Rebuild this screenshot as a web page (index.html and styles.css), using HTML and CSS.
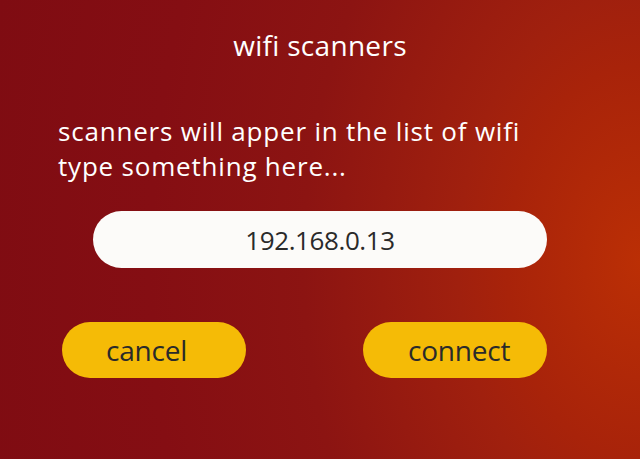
FILE: index.html
```html
<!DOCTYPE html>
<html>
<head>
<meta charset="utf-8">
<link rel="stylesheet" href="styles.css">
</head>
<body>
<div class="screen">
  <h1 class="title">wifi scanners</h1>
  <p class="message">scanners will apper in the list of wifi<br>type something here...</p>
  <div class="field-row">
    <div class="field">192.168.0.13</div>
  </div>
  <div class="actions">
    <button class="btn btn-cancel">cancel</button>
    <button class="btn btn-connect">connect</button>
  </div>
</div>
</body>
</html>
```
FILE: styles.css
```css
html, body {
  margin: 0;
  padding: 0;
  width: 640px;
  height: 459px;
  overflow: hidden;
}
body {
  background: radial-gradient(700px 1036px at 640px 262px,
    #bb2f05 0%, #a8230a 19%, #a0200e 26%, #8c1412 48%, #850e13 70%, #7f0c12 95%);
  font-family: "Open Sans", "Lato", sans-serif;
  font-variant-ligatures: none;
}
.screen {
  display: flex;
  flex-direction: column;
  height: 459px;
}
.title {
  margin: 0;
  padding-top: 28px;
  text-align: center;
  font-size: 28px;
  font-weight: 400;
  line-height: 34px;
  letter-spacing: 0.3px;
  color: #ffffff;
}
.message {
  margin: 0;
  padding: 52px 0 0 58px;
  font-size: 26px;
  line-height: 35px;
  letter-spacing: 0.8px;
  color: #ffffff;
}
.field-row {
  display: flex;
  justify-content: center;
  padding-top: 27px;
}
.field {
  width: 454px;
  height: 57px;
  border-radius: 29px;
  background: #fcfbf9;
  display: flex;
  align-items: center;
  justify-content: center;
  font-size: 26px;
  letter-spacing: -0.4px;
  color: #2a2a2a;
}
.actions {
  display: flex;
  justify-content: space-between;
  padding: 54px 93px 0 62px;
}
.btn {
  width: 184px;
  height: 56px;
  border: none;
  border-radius: 28px;
  background: #f5bb06;
  font-family: inherit;
  font-size: 28px;
  letter-spacing: -0.2px;
  color: #2a2a2a;
  text-align: left;
  padding: 0 0 0 44px;
}
.btn-connect {
  padding-left: 45px;
}
```
